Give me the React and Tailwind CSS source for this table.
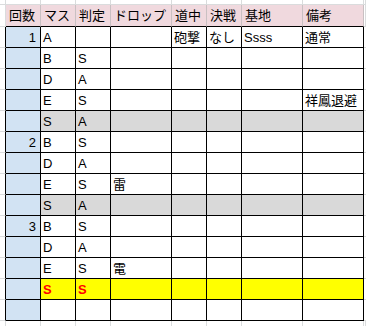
import React from 'react';

const font = { fontFamily: '"Liberation Sans", "Noto Sans CJK JP", sans-serif' };

const headers = ['回数', 'マス', '判定', 'ドロップ', '道中', '決戦', '基地', '備考'];

const rows = [
  { n: '1', c: ['A', '', '', '砲撃', 'なし', 'Ssss', '通常'] },
  { c: ['B', 'S'] },
  { c: ['D', 'A'] },
  { c: ['E', 'S', '', '', '', '', '祥鳳退避'] },
  { c: ['S', 'A'], tone: 'gray' },
  { n: '2', c: ['B', 'S'] },
  { c: ['D', 'A'] },
  { c: ['E', 'S', '雷'] },
  { c: ['S', 'A'], tone: 'gray' },
  { n: '3', c: ['B', 'S'] },
  { c: ['D', 'A'] },
  { c: ['E', 'S', '電'] },
  { c: ['S', 'S'], tone: 'yellow' },
  { c: [] },
];

// gutter cells = the sheet's own light gridlines around the table
const Gutter = ({ edge }) => (
  <div
    className={
      edge === 'black'
        ? 'border-r border-b border-r-black border-b-[#dadcdd]'
        : 'border-r border-b border-[#dadcdd]'
    }
  />
);

const App = () => {
  return (
    <div
      className="w-[366px] h-[326px] bg-white grid grid-cols-[6px_35px_35px_35px_61px_35px_35px_61px_61px_1fr] grid-rows-[5px_22px_repeat(14,21px)_1fr] text-[13px] leading-[15px] text-black"
      style={font}
    >
      {/* top gutter row */}
      {Array.from({ length: 10 }).map((_, i) => (
        <Gutter key={`t${i}`} />
      ))}

      {/* header */}
      <Gutter />
      {headers.map((h) => (
        <div
          key={h}
          className="bg-[#f0d9de] border-r border-b border-r-[#c9c0c2] border-b-black flex items-end pl-[3px] pb-[3px] whitespace-nowrap overflow-hidden"
        >
          {h}
        </div>
      ))}
      <Gutter />

      {/* data rows */}
      {rows.map((r, ri) => {
        const cellBg =
          r.tone === 'gray' ? 'bg-[#d9d9d9]' : r.tone === 'yellow' ? 'bg-[#ffff00]' : 'bg-white';
        return (
          <React.Fragment key={ri}>
            <Gutter edge="black" />
            <div className="bg-[#d2e3f3] border-r border-b border-black flex items-end justify-end pr-[4px] pb-[2px]">
              {r.n || ''}
            </div>
            {Array.from({ length: 7 }).map((_, ci) => (
              <div
                key={ci}
                className={`${cellBg} border-r border-b border-black flex items-end pl-[2px] pb-[2px] whitespace-nowrap overflow-hidden`}
              >
                {r.tone === 'yellow' ? (
                  <span className="text-[#ff0000] font-bold">{r.c[ci] || ''}</span>
                ) : (
                  r.c[ci] || ''
                )}
              </div>
            ))}
            <div className="border-b border-[#dadcdd]" />
          </React.Fragment>
        );
      })}

      {/* bottom gutter row */}
      {Array.from({ length: 10 }).map((_, i) => (
        <div key={`b${i}`} className="border-r border-[#dadcdd]" />
      ))}
    </div>
  );
};

export default App;
